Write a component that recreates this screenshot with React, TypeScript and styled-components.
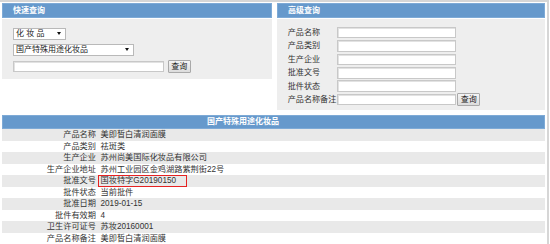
import React from "react";
import styled, { createGlobalStyle } from "styled-components";

const GlobalStyle = createGlobalStyle`
  html, body { margin: 0; padding: 0; background: #fff; }
  body {
    font-family: "Liberation Sans", Arial, "Noto Sans CJK SC", sans-serif;
    font-size: 8.2px;
    color: #333;
  }
  * { box-sizing: border-box; }
`;

const Page = styled.div`
  width: 549px;
  height: 244px;
  overflow: hidden;
  border-top: 2px solid #d6d6d6;
  border-right: 2px solid #d6d6d6;
  padding: 1px 2px 0 2px;
`;

const TopRow = styled.div`
  display: flex;
  gap: 5px;
  align-items: flex-start;
`;

const Panel = styled.section<{ $w: number }>`
  width: ${(p) => p.$w}px;
  display: flex;
  flex-direction: column;
  gap: 1px;
`;

const PanelHead = styled.div`
  height: 15px;
  background: #6699cc;
  border: 1px solid #7eaad6;
  color: #fff;
  font-weight: bold;
  font-size: 8px;
  line-height: 13px;
  padding-left: 10px;
`;

const PanelBody = styled.div<{ $h: number }>`
  height: ${(p) => p.$h}px;
  background: #eeeeee;
`;

const QuickBody = styled(PanelBody)`
  padding: 9px 0 0 11px;
  display: flex;
  flex-direction: column;
  gap: 4.5px;
`;

const SelectBox = styled.div<{ $w: number }>`
  width: ${(p) => p.$w}px;
  height: 11.5px;
  background: #fff;
  border: 1px solid #b9b9b9;
  display: flex;
  align-items: center;
  justify-content: space-between;
  padding: 0 4px 0 2px;
  font-size: 8px;
  color: #222;
  line-height: 1;
`;

const Arrow = styled.span`
  width: 0;
  height: 0;
  border-left: 2px solid transparent;
  border-right: 2px solid transparent;
  border-top: 3px solid #111;
`;

const InputRow = styled.div`
  display: flex;
  align-items: center;
  gap: 4px;
`;

const TextInput = styled.div<{ $w: number }>`
  width: ${(p) => p.$w}px;
  height: 11.6px;
  background: #fff;
  border: 1px solid #c8c8c8;
  box-shadow: inset 1px 1px 0 #e2e2e2;
`;

const Button = styled.button`
  width: 23.5px;
  height: 13px;
  padding: 0;
  font-family: inherit;
  font-size: 8px;
  color: #222;
  background: linear-gradient(#f4f4f4, #dcdcdc);
  border: 1px solid #a9a9a9;
  border-radius: 1px;
  line-height: 1;
`;

const AdvBody = styled(PanelBody)`
  padding: 7px 0 0 10.7px;
  display: grid;
  grid-template-columns: 48.3px auto auto;
  grid-auto-rows: 13.4px;
  justify-content: start;
  align-items: center;
  column-gap: 1px;
`;

const AdvLabel = styled.div`
  font-size: 8.1px;
  color: #333;
  white-space: nowrap;
  line-height: 11.5px;
  grid-column: 1;
`;

const AdvInput = styled(TextInput)`
  grid-column: 2;
`;

const AdvButton = styled(Button)`
  grid-column: 3;
`;

const Table = styled.div`
  margin-top: 5px;
  width: 543px;
`;

const TableHead = styled.div`
  height: 14px;
  background: #6699cc;
  border: 1px solid #7eaad6;
  color: #fff;
  font-weight: bold;
  font-size: 8px;
  line-height: 12px;
  text-align: center;
  padding-right: 61px;
`;

const Row = styled.div<{ $odd: boolean }>`
  height: 11.5px;
  display: flex;
  align-items: center;
  background: ${(p) => (p.$odd ? "#e9e9e9" : "#ffffff")};
  line-height: 11.5px;
`;

const Label = styled.div`
  width: 95px;
  text-align: right;
  padding-right: 1px;
  color: #333;
  white-space: nowrap;
`;

const Value = styled.div`
  padding-left: 3.5px;
  color: #333;
  white-space: nowrap;
  display: flex;
  align-items: center;
`;

const Highlight = styled.span`
  display: inline-block;
  margin-left: -3px;
  height: 12px;
  line-height: 9.5px;
  padding: 0 10px 0 2px;
  border: 1.5px solid #e52222;
  margin-top: 1px;
`;

const advFields = ["产品名称", "产品类别", "生产企业", "批准文号", "批件状态"];

const rows: { label: string; value: string; mark?: boolean }[] = [
  { label: "产品名称", value: "美即皙白清润面膜" },
  { label: "产品类别", value: "祛斑类" },
  { label: "生产企业", value: "苏州尚美国际化妆品有限公司" },
  { label: "生产企业地址", value: "苏州工业园区金鸡湖路紫荆街22号" },
  { label: "批准文号", value: "国妆特字G20190150", mark: true },
  { label: "批件状态", value: "当前批件" },
  { label: "批准日期", value: "2019-01-15" },
  { label: "批件有效期", value: "4" },
  { label: "卫生许可证号", value: "苏妆20160001" },
  { label: "产品名称备注", value: "美即皙白清润面膜" },
];

export default function App() {
  return (
    <>
      <GlobalStyle />
      <Page>
        <TopRow>
          <Panel $w={270}>
            <PanelHead>快速查询</PanelHead>
            <QuickBody $h={60}>
              <SelectBox $w={52.5}>
                <span>化 妆 品</span>
                <Arrow />
              </SelectBox>
              <SelectBox $w={121}>
                <span>国产特殊用途化妆品</span>
                <Arrow />
              </SelectBox>
              <InputRow>
                <TextInput $w={150.5} />
                <Button>查询</Button>
              </InputRow>
            </QuickBody>
          </Panel>
          <Panel $w={268}>
            <PanelHead>高级查询</PanelHead>
            <AdvBody $h={91}>
              {advFields.map((f) => (
                <React.Fragment key={f}>
                  <AdvLabel>{f}</AdvLabel>
                  <AdvInput $w={119} />
                </React.Fragment>
              ))}
              <AdvLabel>产品名称备注</AdvLabel>
              <AdvInput $w={119} />
              <AdvButton>查询</AdvButton>
            </AdvBody>
          </Panel>
        </TopRow>
        <Table>
          <TableHead>国产特殊用途化妆品</TableHead>
          {rows.map((r, i) => (
            <Row key={r.label} $odd={i % 2 === 0}>
              <Label>{r.label}</Label>
              <Value>
                {r.mark ? <Highlight>{r.value}</Highlight> : r.value}
              </Value>
            </Row>
          ))}
        </Table>
      </Page>
    </>
  );
}
